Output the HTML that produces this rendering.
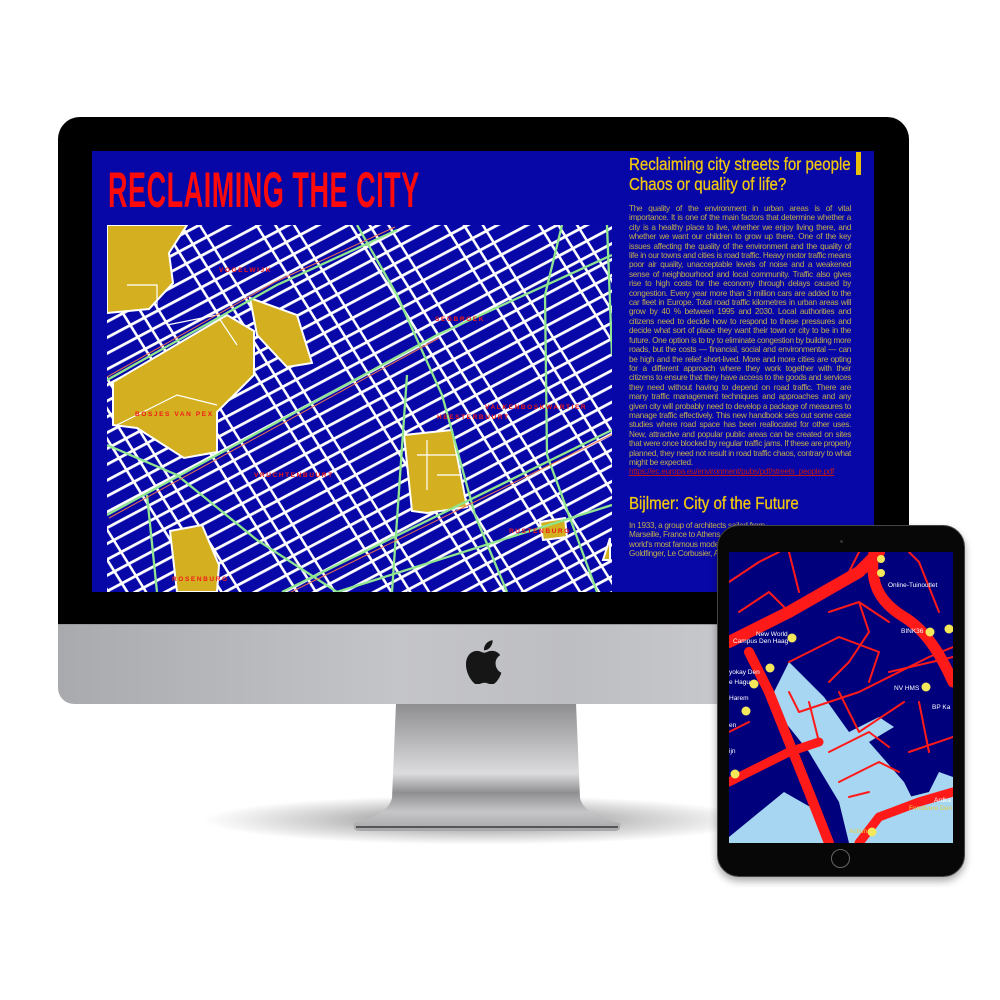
<!DOCTYPE html>
<html><head><meta charset="utf-8"><style>
*{margin:0;padding:0;box-sizing:border-box}
body{width:1000px;height:1000px;background:#fff;position:relative;overflow:hidden;font-family:"Liberation Sans",sans-serif}
.abs{position:absolute}
#shadow{left:200px;top:795px;width:560px;height:50px;border-radius:50%;background:radial-gradient(ellipse at center,rgba(0,0,0,.5) 0%,rgba(0,0,0,.2) 40%,rgba(0,0,0,0) 70%)}
#bezel{left:58px;top:117px;width:851px;height:508px;background:#000;border-radius:22px 22px 0 0}
#chin{left:58px;top:624px;width:851px;height:80px;background:linear-gradient(90deg,#a9aaae 0%,#c4c5c9 40%,#bdbec2 60%,#d3d4d6 100%);border-radius:0 0 16px 16px;border-top:1px solid #999}
#stand{left:352px;top:703px;width:270px;height:130px}
#screen{left:92px;top:151px;width:782px;height:441px;background:#0707a8;overflow:hidden}
#title{left:16px;top:14px;color:#ff0a0a;font-weight:bold;font-size:50px;line-height:50px;white-space:nowrap;transform:scaleX(.54);transform-origin:0 0;letter-spacing:1px}
#map{left:15px;top:74px}
#col{left:537px;top:0;width:222px;color:#e8c20a}
h2{font-weight:normal;font-size:17.5px;line-height:20px;color:#f2c80c;white-space:nowrap;transform:scaleX(.86);transform-origin:0 0;-webkit-text-stroke:.3px #f2c80c}
.p{font-size:8.2px;line-height:9.4px;color:#c2ae4c;text-align:justify;letter-spacing:-.3px}
.p a{color:#c01818;text-decoration:underline}
#ybar{left:764px;top:1px;width:5px;height:23px;background:#e8c00a}
#ipad{left:717px;top:525px;width:248px;height:352px;background:#070707;border-radius:22px;box-shadow:0 4px 8px rgba(0,0,0,.35);border:1px solid #444}
#iscr{left:11px;top:26px;width:224px;height:291px;background:#00007c;overflow:hidden}
#home{left:113px;top:323px;width:19px;height:19px;border-radius:50%;border:1.5px solid #666}
#cam{left:122px;top:14px;width:3px;height:3px;border-radius:50%;background:#333}
</style></head><body>
<div id="shadow" class="abs"></div>
<svg id="stand" class="abs" width="270" height="130" viewBox="0 0 270 130">
<defs><linearGradient id="sg" x1="0" y1="0" x2="0" y2="1">
<stop offset="0" stop-color="#8d8d90"/><stop offset=".3" stop-color="#b8b8ba"/><stop offset=".55" stop-color="#dcdcde"/><stop offset=".7" stop-color="#8f8f92"/><stop offset=".85" stop-color="#c6c6c8"/><stop offset="1" stop-color="#a6a6a8"/></linearGradient></defs>
<path d="M44 0 H224 L228 95 Q232 112 268 120 Q270 128 262 128 H8 Q0 128 2 120 Q36 112 40 95 Z" fill="url(#sg)"/>
<path d="M4 124 H266" stroke="#555" stroke-width="2"/>
</svg>
<div id="bezel" class="abs"></div>
<div id="chin" class="abs">
<svg class="abs" style="left:408px;top:15px" width="36" height="44" viewBox="0 0 170 210"><path fill="#161616" d="M140 111c0-26 21-38 22-39-12-18-31-20-37-20-16-2-31 9-39 9-8 0-20-9-34-9C34 52 17 62 8 79c-19 33-5 81 13 107 9 13 19 27 33 26 13-1 18-8 34-8s20 8 34 8c14 0 23-13 32-26 10-15 14-29 14-30-1 0-27-11-28-45zM115 34c7-9 12-21 11-33-10 0-23 7-30 16-7 8-13 20-11 32 11 1 23-6 30-15z"/></svg>
</div>
<div id="screen" class="abs">
<div id="title" class="abs">RECLAIMING THE CITY</div>
<svg id="map" class="abs" width="505" height="367" viewBox="0 0 505 367">
<defs>
<pattern id="p1" width="20" height="14" patternUnits="userSpaceOnUse" patternTransform="rotate(-28)"><rect width="20" height="2.8" fill="#fff"/></pattern>
<pattern id="p2" width="16" height="16" patternUnits="userSpaceOnUse" patternTransform="rotate(58)"><rect width="16" height="2.6" fill="#fff"/></pattern>
<pattern id="p3" width="60" height="80" patternUnits="userSpaceOnUse" patternTransform="rotate(58)"><rect width="60" height="40" fill="#fff"/></pattern>
<mask id="m"><rect width="505" height="367" fill="url(#p3)"/></mask>
</defs>
<rect width="505" height="367" fill="#0808a8"/>
<rect width="505" height="367" fill="url(#p1)"/>
<rect width="505" height="367" fill="url(#p2)" mask="url(#m)"/>
<g fill="#d4b020" stroke="#fff" stroke-width="2">
<path d="M0 0H80L62 28 66 58 42 84 0 88Z"/>
<path d="M6 157L120 90 147 106 147 150 110 187 110 227 77 233 30 203 6 200Z"/>
<path d="M143 73L190 90 205 138 180 142 150 110Z"/>
<path d="M297 210L345 205 360 282 320 288 305 286Z"/>
<path d="M63 306L95 300 112 340 110 367H70Z"/>
<path d="M433 297L458 293 460 312 436 315Z"/>
<path d="M503 313V335H496Z"/>
</g>
<g fill="none" stroke="#fff" stroke-width="1.2"><path d="M20 60h30v25M10 200l60-30 40 10M60 100l50-10 20 30M310 230h40M320 215v50M330 250h25"/></g>
<g fill="none" stroke="#8fe68f" stroke-width="2.3">
<path d="M0 155L170 60 290 5"/>
<path d="M0 290L330 110 505 30"/>
<path d="M175 367L505 205"/>
<path d="M230 367L505 280"/>
<path d="M250 0L290 70 335 170 368 290 400 367"/>
<path d="M455 0L438 70 440 230 490 367"/>
<path d="M0 220L70 250 150 315 230 367"/>
<path d="M40 270L50 367"/>
<path d="M500 0L505 130"/>
<path d="M300 150L285 367"/>
</g>
<g fill="none" stroke="#f07050" stroke-width="1"><path d="M0 152L168 57 288 2M2 293L332 113M178 370L508 208"/></g>
<g font-family="Liberation Sans" font-size="6.5" font-weight="bold" fill="#f01818" letter-spacing="1.6">
<text x="112" y="47">VOGELWIJK</text>
<text x="328" y="96">SEGBROEK</text>
<text x="28" y="191">BOSJES VAN PEX</text>
<text x="378" y="184">VALKENBOSKWARTIER</text>
<text x="330" y="194">HEESTERBUURT</text>
<text x="147" y="252">VRUCHTENBUURT</text>
<text x="402" y="308">RUSTENBURG</text>
<text x="65" y="356">ROSENBURG</text>
</g>
</svg>
<div id="col" class="abs">
<h2 style="margin-top:3px">Reclaiming city streets for people</h2>
<h2>Chaos or quality of life?</h2>
<div class="p" style="margin-top:10px">The quality of the environment in urban areas is of vital importance. It is one of the main factors that determine whether a city is a healthy place to live, whether we enjoy living there, and whether we want our children to grow up there. One of the key issues affecting the quality of the environment and the quality of life in our towns and cities is road traffic. Heavy motor traffic means poor air quality, unacceptable levels of noise and a weakened sense of neighbourhood and local community. Traffic also gives rise to high costs for the economy through delays caused by congestion. Every year more than 3 million cars are added to the car fleet in Europe. Total road traffic kilometres in urban areas will grow by 40 % between 1995 and 2030. Local authorities and citizens need to decide how to respond to these pressures and decide what sort of place they want their town or city to be in the future. One option is to try to eliminate congestion by building more roads, but the costs — financial, social and environmental — can be high and the relief short-lived. More and more cities are opting for a different approach where they work together with their citizens to ensure that they have access to the goods and services they need without having to depend on road traffic. There are many traffic management techniques and approaches and any given city will probably need to develop a package of measures to manage traffic effectively. This new handbook sets out some case studies where road space has been reallocated for other uses. New, attractive and popular public areas can be created on sites that were once blocked by regular traffic jams. If these are properly planned, they need not result in road traffic chaos, contrary to what might be expected.<br><a>https://ec.europa.eu/environment/pubs/pdf/streets_people.pdf</a></div>
<h2 style="margin-top:16px">Bijlmer: City of the Future</h2>
<div class="p" style="margin-top:8px;text-align:left">In 1933, a group of architects sailed from<br>Marseille, France to Athens, Greece, some of the<br>world's most famous modernists among them<br>Goldfinger, Le Corbusier, Alvar Aalto and others</div>
</div>
<div id="ybar" class="abs"></div>
</div>
<div id="ipad" class="abs">
<div id="cam" class="abs"></div>
<div id="iscr" class="abs">
<svg width="224" height="291" viewBox="0 0 224 291">
<rect width="224" height="291" fill="#00007c"/>
<path d="M0 285L55 240 90 260 100 291H0Z M130 291L160 250 200 240 210 220 224 225V291Z M60 110L95 145 120 180 150 165 165 175 140 190 175 230 190 260 150 291H120L110 250 80 200 40 150Z" fill="#a6d6f2"/>
<g fill="none" stroke="#ff1a1a" stroke-linecap="round" stroke-linejoin="round">
<path stroke-width="12" d="M0 90L60 60 130 20 150 0"/>
<path stroke-width="11" d="M145 0C140 30 150 50 175 65 200 80 215 110 224 130"/>
<path stroke-width="10" d="M20 100L40 140 60 190 80 240 100 291"/>
<path stroke-width="9" d="M0 230L60 200 90 190M130 291L150 265 190 250 224 240"/>
<path stroke-width="2" d="M0 30L30 10 50 0M10 60L40 40 60 60M60 110L110 85 150 100M100 60L130 50 160 70M60 140L70 160 130 140 200 105 224 95M80 150L90 190M110 140L130 180 175 150M100 200L140 180 160 195M110 230L150 210 170 220M120 245L140 240M190 150L200 200M160 120L224 105M210 60L190 10 180 0M130 0L120 20M60 0L70 40M150 100L140 130M0 180L20 170M180 200L224 185M130 50L140 80 120 110 100 130"/>
</g>
<g font-family="Liberation Sans" font-size="6.5" fill="#fff">
<text x="159" y="35">Online-Tuinoutlet</text>
<text x="27" y="84">New World</text>
<text x="4" y="91">Campus Den Haag</text>
<text x="0" y="122">yokay Den</text>
<text x="0" y="132">e Hague)</text>
<text x="0" y="148">Harem</text>
<text x="165" y="138">NV HMS</text>
<text x="172" y="81">BINK36</text>
<text x="203" y="157">BP Ka</text>
<text x="0" y="175">en</text>
<text x="0" y="201">ijn</text>
<text x="205" y="250">Ardka</text>
<text x="180" y="258" fill="#e8d040">Fondtvere Den</text>
<text x="120" y="281" fill="#e8d040">Action</text>
</g>
<g fill="#f4e85a">
<circle cx="152" cy="21" r="4"/><circle cx="152" cy="7" r="4"/><circle cx="63" cy="86" r="4.5"/><circle cx="41" cy="116" r="4.5"/><circle cx="25" cy="132" r="4.5"/><circle cx="17" cy="159" r="4.5"/><circle cx="197" cy="135" r="4.5"/><circle cx="201" cy="80" r="4.5"/><circle cx="220" cy="77" r="4.5"/><circle cx="6" cy="222" r="4.5"/><circle cx="143" cy="280" r="4.5"/>
</g>
</svg>
</div>
<div id="home" class="abs"></div>
</div>
</body></html>
